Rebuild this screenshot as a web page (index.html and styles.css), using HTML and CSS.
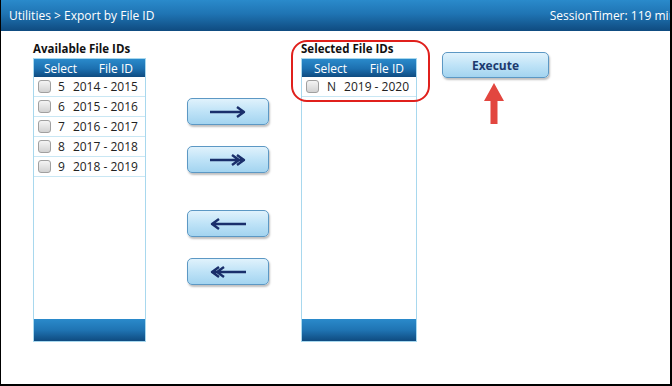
FILE: index.html
```html
<!DOCTYPE html>
<html lang="en">
<head>
    <meta charset="UTF-8">
    <meta name="viewport" content="width=device-width, initial-scale=1.0">
    <title>Export by File ID</title>
    <link rel="stylesheet" href="styles.css">
</head>
<body>
    <div class="frame">
        <div class="topbar">
            <span class="crumbs">Utilities &gt; Export by File ID</span>
            <span class="timer">SessionTimer: 119 min</span>
        </div>

        <div class="content">
            <div class="panel panel-left">
                <div class="panel-title">Available File IDs</div>
                <div class="grid">
                    <div class="grid-head">
                        <span class="col-select">Select</span>
                        <span class="col-id">File ID</span>
                    </div>
                    <div class="grid-body">
                        <div class="row"><span class="check"></span><span class="num">5</span><span class="years">2014 - 2015</span></div>
                        <div class="row"><span class="check"></span><span class="num">6</span><span class="years">2015 - 2016</span></div>
                        <div class="row"><span class="check"></span><span class="num">7</span><span class="years">2016 - 2017</span></div>
                        <div class="row"><span class="check"></span><span class="num">8</span><span class="years">2017 - 2018</span></div>
                        <div class="row"><span class="check"></span><span class="num">9</span><span class="years">2018 - 2019</span></div>
                    </div>
                    <div class="grid-foot"></div>
                </div>
            </div>

            <div class="movers">
                <button class="move-btn">
                    <svg width="38" height="14" viewBox="0 0 38 14"><path d="M1 7H35M28 2L35 7L28 12" fill="none" stroke="#1a2f6b" stroke-width="2.4" stroke-linejoin="round"/></svg>
                </button>
                <button class="move-btn">
                    <svg width="38" height="14" viewBox="0 0 38 14"><path d="M1 7H35M23 2L30 7L23 12M28 2L35 7L28 12" fill="none" stroke="#1a2f6b" stroke-width="2.4" stroke-linejoin="round"/></svg>
                </button>
                <button class="move-btn gap-top">
                    <svg width="38" height="14" viewBox="0 0 38 14"><path d="M37 7H3M10 2L3 7L10 12" fill="none" stroke="#1a2f6b" stroke-width="2.4" stroke-linejoin="round"/></svg>
                </button>
                <button class="move-btn">
                    <svg width="38" height="14" viewBox="0 0 38 14"><path d="M37 7H3M15 2L8 7L15 12M10 2L3 7L10 12" fill="none" stroke="#1a2f6b" stroke-width="2.4" stroke-linejoin="round"/></svg>
                </button>
            </div>

            <div class="panel panel-right">
                <div class="panel-title">Selected File IDs</div>
                <div class="grid">
                    <div class="grid-head">
                        <span class="col-select">Select</span>
                        <span class="col-id">File ID</span>
                    </div>
                    <div class="grid-body">
                        <div class="row"><span class="check"></span><span class="num">N</span><span class="years">2019 - 2020</span></div>
                    </div>
                    <div class="grid-foot"></div>
                </div>
            </div>

            <div class="actions">
                <button class="execute-btn">Execute</button>
            </div>

            <!-- annotation marks -->
            <div class="callout"></div>
            <svg class="pointer" width="24" height="44" viewBox="0 0 24 44">
                <path d="M12 1L22 19H15.5V42H8.5V19H2Z" fill="#e2463f"/>
            </svg>
        </div>
    </div>
</body>
</html>
```

FILE: styles.css
```css
body {
    margin: 0;
    font-family: "Open Sans", "Noto Sans", sans-serif;
    background-color: #fff;
}

.frame {
    width: 672px;
    height: 386px;
    box-sizing: border-box;
    border-left: 1px solid #000;
    border-right: 2px solid #000;
    border-bottom: 2px solid #000;
    overflow: hidden;
    position: relative;
}

/* Top bar */
.topbar {
    height: 31px;
    display: flex;
    justify-content: space-between;
    align-items: center;
    background: linear-gradient(to bottom, #2a8acb 0%, #1f74b3 45%, #0f4b80 100%);
    color: #fff;
    font-size: 12px;
    padding-left: 8px;
    white-space: nowrap;
}

.timer {
    margin-right: -6px;
}

/* Main content */
.content {
    display: flex;
    align-items: flex-start;
    padding: 10px 0 0 32px;
    position: relative;
}

.panel-title {
    font-size: 11.5px;
    font-weight: bold;
    color: #111;
    height: 17px;
    line-height: 15px;
    white-space: nowrap;
}

.panel-left .grid {
    width: 113px;
}

.panel-right .grid {
    width: 116px;
}

.grid {
    height: 284px;
    box-sizing: border-box;
    border: 1px solid #a8d8ee;
    display: flex;
    flex-direction: column;
}

.grid-head {
    height: 18px;
    display: flex;
    align-items: center;
    background: linear-gradient(to bottom, #2a8acb 0%, #1c6faf 55%, #0f4b80 100%);
    color: #fff;
    font-size: 12px;
}

.col-select {
    margin-left: 10px;
}

.col-id {
    margin-left: auto;
    margin-right: 12px;
}

.panel-right .col-select {
    margin-left: 12px;
}

.grid-body {
    flex: 1;
    background-color: #fff;
}

.row {
    height: 19px;
    border-bottom: 1px solid #c9e7f4;
    display: flex;
    align-items: center;
    font-size: 12px;
    color: #222;
    white-space: nowrap;
}

.check {
    width: 11px;
    height: 11px;
    margin-left: 4px;
    border: 1px solid #a0a0a0;
    border-radius: 3px;
    background: linear-gradient(to bottom, #f4f4f4, #d2d2d2);
}

.num {
    margin-left: 7px;
}

.years {
    margin-left: 8px;
}

.panel-right .num {
    margin-left: 8px;
}

.grid-foot {
    height: 22px;
    background: linear-gradient(to bottom, #2a8acb 0%, #1f74b3 50%, #0f4b80 100%);
}

/* Arrow buttons */
.movers {
    display: flex;
    flex-direction: column;
    gap: 21px;
    margin-left: 41px;
    margin-top: 57px;
}

.move-btn,
.execute-btn {
    border: 1px solid #5c98c4;
    border-radius: 5px;
    background: linear-gradient(to bottom, #e0f2fc 0%, #bfe3f7 50%, #a3d4f0 100%);
    box-shadow: 1px 2px 2px rgba(0, 0, 0, 0.25);
    padding: 0;
    display: flex;
    align-items: center;
    justify-content: center;
}

.move-btn {
    width: 82px;
    height: 27px;
}

.move-btn.gap-top {
    margin-top: 16px;
}

.panel-right {
    margin-left: 32px;
}

.actions {
    margin-left: 25px;
    margin-top: 11px;
}

.execute-btn {
    width: 107px;
    height: 26px;
    font-family: "Open Sans", "Noto Sans", sans-serif;
    font-size: 12px;
    font-weight: bold;
    color: #1c3a6e;
}

/* Annotation overlays */
.callout {
    position: absolute;
    left: 290px;
    top: 9px;
    width: 135px;
    height: 58px;
    border: 2px solid #e0201c;
    border-radius: 16px;
}

.pointer {
    position: absolute;
    left: 481px;
    top: 51px;
}
```
